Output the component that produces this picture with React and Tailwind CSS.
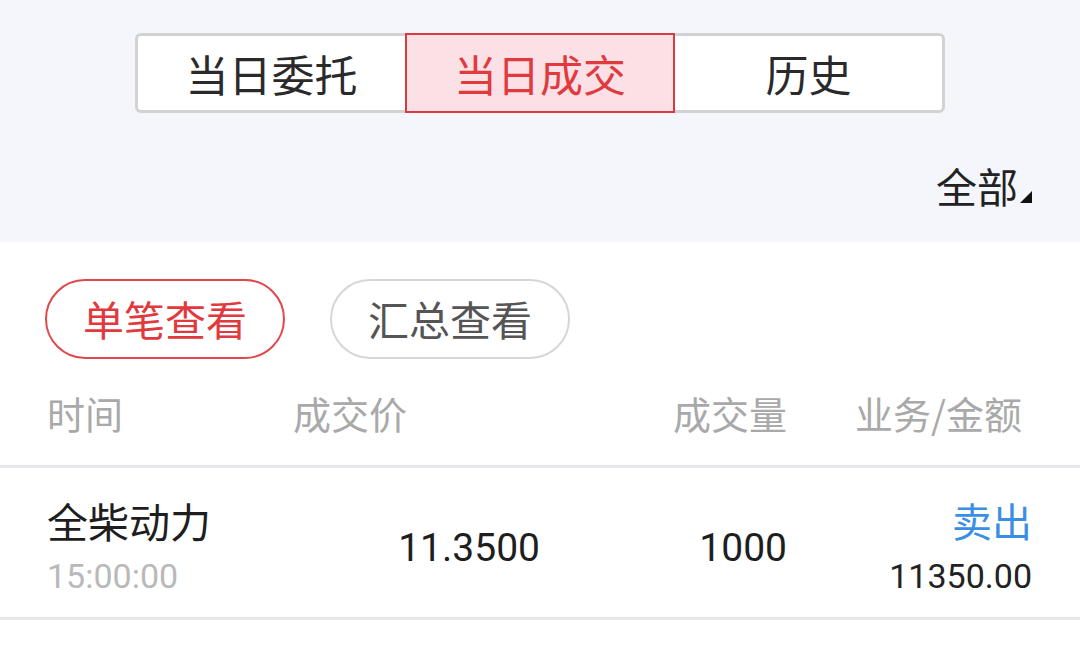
import { useState } from "react";

const font = { fontFamily: '"Noto Sans CJK SC", "Noto Sans", sans-serif' };
const num = { fontFamily: 'Roboto, "Noto Sans CJK SC", sans-serif' };

export default function App() {
  const [tab, setTab] = useState(1);
  const [mode, setMode] = useState(0);
  const tabs = ["当日委托", "当日成交", "历史"];

  return (
    <div className="w-[1080px] h-[648px] bg-white overflow-hidden text-[#222]" style={font}>
      {/* top filter area */}
      <div className="bg-[#f5f6fc] h-[242px] flex flex-col">
        <div className="flex justify-center pt-[33px]">
          {tabs.map((t, i) => (
            <button
              key={t}
              onClick={() => setTab(i)}
              className={
                "w-[270px] h-[80px] flex items-center justify-center text-[43px] " +
                (i === tab
                  ? "border-2 border-[#dc3a40] bg-[#fbe1e5] text-[#e0393e]"
                  : "bg-white border-y-[3px] border-[#d2d2d2] text-[#2a2a2a] " +
                    (i === 0 ? "border-l-[3px] rounded-l-[6px]" : "border-r-[3px] rounded-r-[6px]"))
              }
            >
              {t}
            </button>
          ))}
        </div>
        <div className="flex justify-end items-end pr-[48px] mt-[48px]">
          <span className="text-[41px] leading-[48px] text-[#222]">全部</span>
          <svg width="12" height="12" viewBox="0 0 12 12" className="mb-[6px] ml-[2px]">
            <path d="M0 12 L12 0 L12 12 Z" fill="#111" />
          </svg>
        </div>
      </div>

      {/* view mode pills */}
      <div className="flex gap-[45px] pl-[45px] pt-[37px]">
        {["单笔查看", "汇总查看"].map((p, i) => (
          <button
            key={p}
            onClick={() => setMode(i)}
            className={
              "w-[240px] h-[80px] rounded-full border-2 text-[41px] flex items-center justify-center " +
              (mode === i ? "border-[#e0484c] text-[#e0393e]" : "border-[#d6d6d6] text-[#555]")
            }
          >
            {p}
          </button>
        ))}
      </div>

      {/* table header */}
      <div className="h-[106px] flex items-center pl-[47px] pr-[58px] text-[38px] text-[#a9a9a9]">
        <div className="w-[246px]">时间</div>
        <div className="w-[250px]">成交价</div>
        <div className="w-[244px] text-right">成交量</div>
        <div className="flex-1 text-right">业务/金额</div>
      </div>
      <div className="h-[3px] bg-[#e7e7ef]" />

      {/* row */}
      <div className="h-[149px] flex items-center pt-[11px] pl-[47px] pr-[48px]">
        <div className="w-[250px]">
          <div className="text-[41px] leading-[56px] text-[#1e1e1e]">全柴动力</div>
          <div className="text-[34px] leading-[56px] text-[#b9b9b9]" style={num}>15:00:00</div>
        </div>
        <div className="w-[243px] text-right text-[39px] text-[#1e1e1e]" style={num}>11.3500</div>
        <div className="w-[247px] text-right text-[39px] text-[#1e1e1e]" style={num}>1000</div>
        <div className="flex-1 text-right">
          <div className="text-[40px] leading-[56px] text-[#3b8fe3]">卖出</div>
          <div className="text-[34px] leading-[56px] text-[#222]" style={num}>11350.00</div>
        </div>
      </div>
      <div className="h-[3px] bg-[#e7e7ef]" />
    </div>
  );
}
